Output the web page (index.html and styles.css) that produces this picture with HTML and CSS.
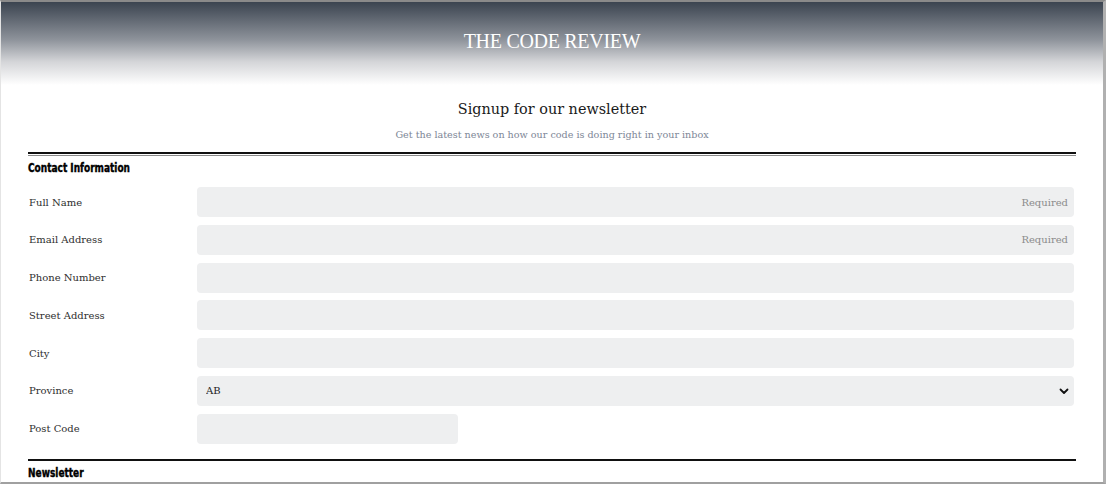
FILE: index.html
```html
<!DOCTYPE html>
<html lang="en">
<head>
<meta charset="utf-8">
<title>The Code Review</title>
<link rel="stylesheet" href="styles.css">
</head>
<body>
<div class="frame">
  <header class="masthead">
    <h1 class="brand">THE CODE REVIEW</h1>
  </header>
  <main class="content">
    <div class="intro">
      <h2 class="intro-title">Signup for our newsletter</h2>
      <p class="intro-sub">Get the latest news on how our code is doing right in your inbox</p>
    </div>
    <form class="signup">
      <section class="group group-first">
        <h3 class="group-title">Contact Information</h3>
        <div class="row">
          <label class="label" for="name">Full Name</label>
          <input class="field" id="name" type="text" placeholder="Required">
        </div>
        <div class="row">
          <label class="label" for="email">Email Address</label>
          <input class="field" id="email" type="email" placeholder="Required">
        </div>
        <div class="row">
          <label class="label" for="phone">Phone Number</label>
          <input class="field" id="phone" type="tel">
        </div>
        <div class="row">
          <label class="label" for="street">Street Address</label>
          <input class="field" id="street" type="text">
        </div>
        <div class="row">
          <label class="label" for="city">City</label>
          <input class="field" id="city" type="text">
        </div>
        <div class="row">
          <label class="label" for="prov">Province</label>
          <div class="select-wrap">
            <select class="field select" id="prov">
              <option>AB</option>
              <option>BC</option>
              <option>MB</option>
              <option>ON</option>
            </select>
            <svg class="chev" width="10" height="7" viewBox="0 0 10 7"><path d="M1.5 1.5 L5 5 L8.5 1.5" fill="none" stroke="#111" stroke-width="1.8" stroke-linecap="round" stroke-linejoin="round"/></svg>
          </div>
        </div>
        <div class="row">
          <label class="label" for="post">Post Code</label>
          <input class="field field-short" id="post" type="text">
        </div>
      </section>
      <section class="group">
        <h3 class="group-title">Newsletter</h3>
      </section>
    </form>
  </main>
</div>
</body>
</html>
```
FILE: styles.css
```css
html, body {
  margin: 0;
  padding: 0;
  height: 100%;
  overflow: hidden;
  background: #ffffff;
}
.frame {
  box-sizing: border-box;
  height: 484px;
  width: 1106px;
  border-top: 2px solid #8a8a8a;
  border-right: 3px solid #b0b0b0;
  border-bottom: 2px solid #a0a0a0;
  border-left: 1px solid #e4e4e4;
  overflow: hidden;
  font-family: "DejaVu Serif", "Liberation Serif", serif;
}
.masthead {
  height: 83px;
  background: linear-gradient(to bottom, #3b4450 0%, #8d929a 45%, #d4d5d8 72%, #ffffff 100%);
  display: flex;
  align-items: center;
  justify-content: center;
}
.brand {
  margin: 0;
  padding-bottom: 4px;
  font-family: "Liberation Serif", serif;
  font-weight: normal;
  font-size: 20px;
  letter-spacing: -0.3px;
  color: #ffffff;
}
.content {
  padding: 0 27px 0 27px;
}
.intro {
  text-align: center;
  padding-top: 13px;
  padding-bottom: 10px;
  border-bottom: 2px solid #111111;
}
.intro-title {
  margin: 0;
  font-weight: normal;
  font-size: 14.4px;
  color: #1a1a1a;
  line-height: 22px;
}
.intro-sub {
  margin: 8px 0 0 0;
  font-size: 9.6px;
  color: #7d8696;
  line-height: 14px;
}
.signup {
  margin: 0;
}
.group {
  border-top: 2px solid #111111;
  margin-top: 15px;
}
.group-first {
  border-top: 1px solid #8a8a8a;
  margin-top: 1px;
}
.group-title {
  margin: 0;
  padding: 5px 0 8px 0;
  font-family: "DejaVu Sans Condensed", "Liberation Sans", sans-serif;
  font-stretch: condensed;
  font-weight: bold;
  font-size: 12.5px;
  line-height: 14px;
  color: #000;
  -webkit-text-stroke: 0.4px #000;
  transform: scaleX(0.8);
  transform-origin: left center;
  white-space: nowrap;
}
.group-first .group-title {
  padding-bottom: 12px;
}
.row {
  display: flex;
  align-items: center;
  height: 30px;
  margin-bottom: 7.8px;
  padding-right: 2px;
}
.label {
  width: 168px;
  flex: none;
  padding-left: 1px;
  font-size: 10px;
  color: #2e2e2e;
}
.field {
  flex: 1;
  box-sizing: border-box;
  height: 30px;
  border: none;
  border-radius: 4px;
  background: #eeeff0;
  font-family: "DejaVu Serif", serif;
  font-size: 10px;
  color: #222;
  padding: 0 6px 0 9px;
  text-align: left;
  outline: none;
}
.field::placeholder {
  color: #8b8b8b;
  text-align: right;
}
.field-short {
  flex: none;
  width: 261px;
}
.select-wrap {
  flex: 1;
  display: flex;
  position: relative;
  height: 30px;
}
.select {
  appearance: none;
  -webkit-appearance: none;
  width: 100%;
}
.chev {
  position: absolute;
  right: 5px;
  top: 12px;
  pointer-events: none;
}
```
